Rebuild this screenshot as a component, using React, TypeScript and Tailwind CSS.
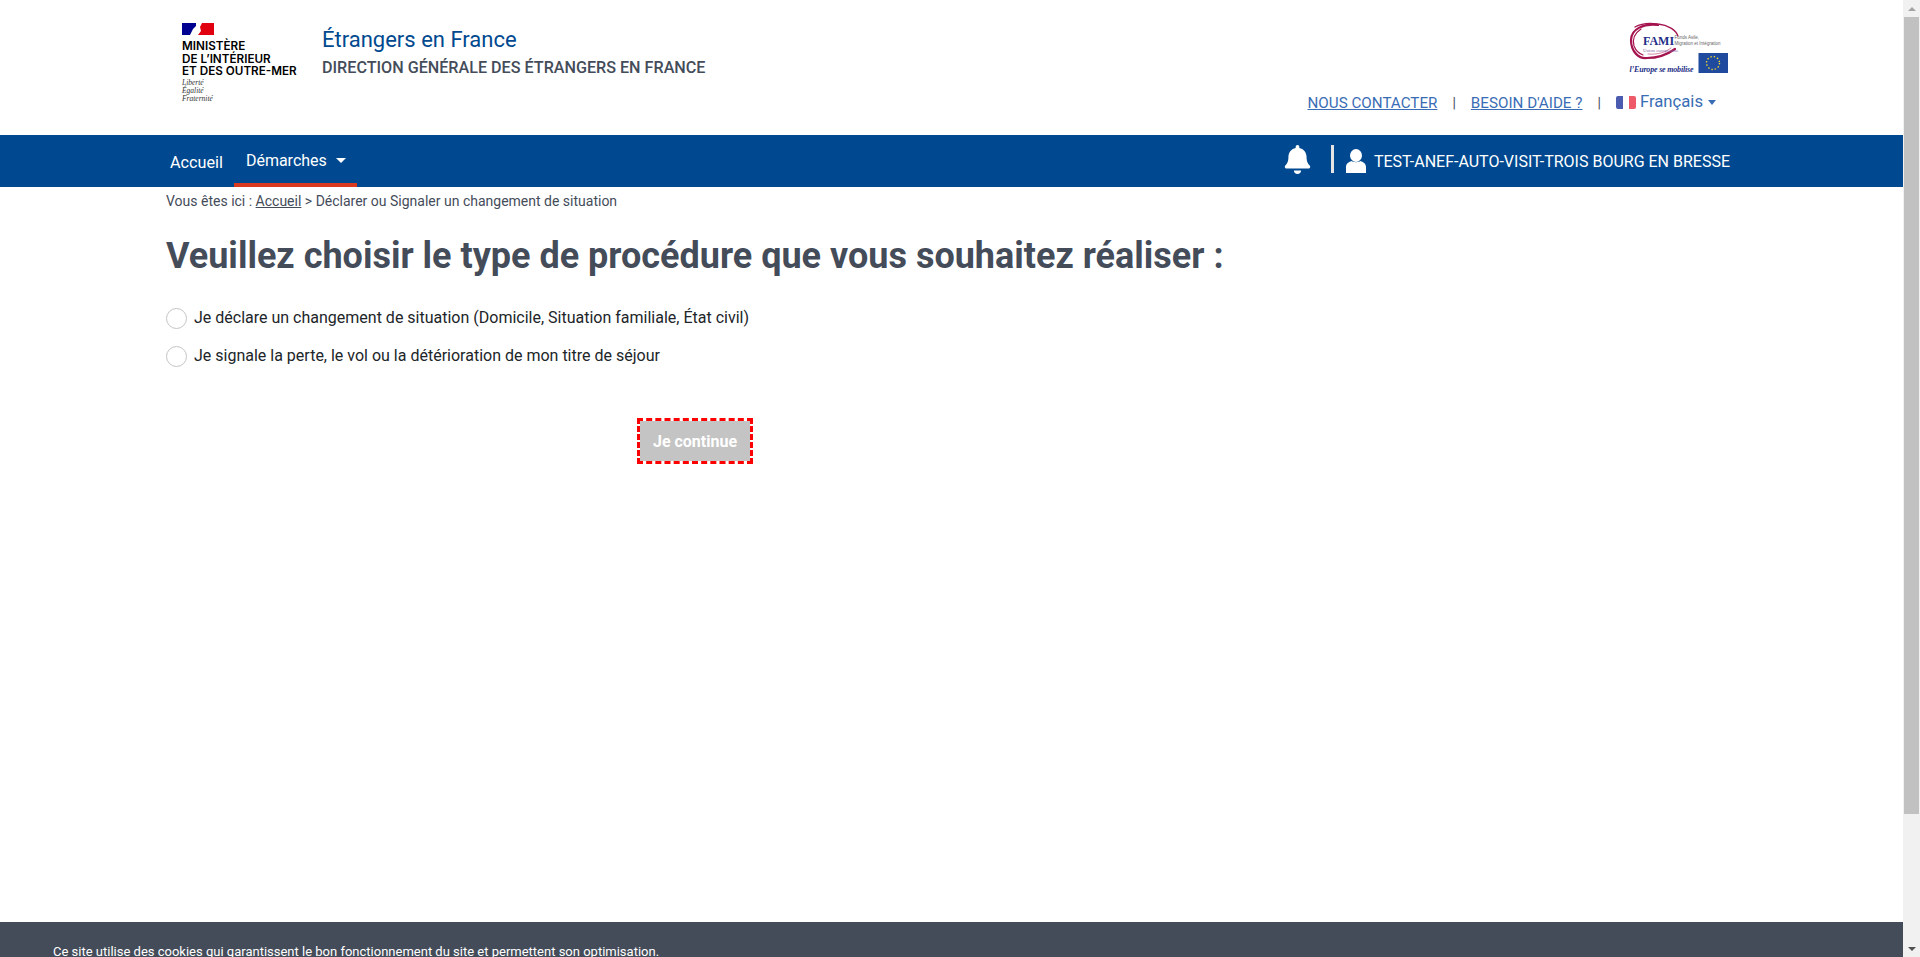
import { FaBell } from "react-icons/fa";

const Caret = ({ className }: { className: string }) => (
	<span className={`inline-block w-0 h-0 border-x-[4px] border-x-transparent border-t-[5px] ${className}`} />
);

const MinistereLogo = () => (
	<div className="w-[120px] pt-[23px] font-['Inter',sans-serif] text-black">
		<svg width="32" height="12" viewBox="0 0 32 12" className="block">
			<rect width="14" height="12" fill="#000091" />
			<rect x="14" width="6" height="12" fill="#fff" />
			<rect x="20" width="12" height="12" fill="#e1000f" />
			<path d="M8 12 L11 6 L14 3 L14 12 Z" fill="#fff" />
			<path d="M20 0 L18 4 L19 8 L16 12 L22 12 L22 0 Z" fill="#e1000f" />
		</svg>
		<div className="mt-[5px] text-[11.7px] leading-[12.5px] font-semibold whitespace-nowrap">
			<div>MINISTÈRE</div>
			<div>DE L’INTÉRIEUR</div>
			<div>ET DES OUTRE-MER</div>
		</div>
		<div className="mt-[1px] font-['Liberation_Serif',serif] italic text-[7.5px] leading-[8px] text-[#333]">
			<div>Liberté</div>
			<div>Égalité</div>
			<div>Fraternité</div>
		</div>
	</div>
);

const FamiLogo = () => (
	<svg width="100" height="56" viewBox="0 0 100 56" className="block">
		<g fill="none" stroke="#a5144f" strokeLinecap="round">
			<path d="M30 3 C16 1 3 7 3 18 C3 30 11 37 19 36 C30 36 40 32 47 27" strokeWidth="2.2" />
			<path d="M7 5 C14 1 24 1 30 2 C40 3 48 8 50 14" strokeWidth="1.3" />
			<path d="M13 7 C7 11 4 17 6 24 C8 29 12 32 15 33" strokeWidth="1.2" />
			<path d="M20 32 C30 33 38 30 43 26" strokeWidth="0.8" stroke="#c96a90" />
		</g>
		<text x="15" y="22.5" fontFamily="Liberation Serif, serif" fontWeight="700" fontSize="12" fill="#1d2f87">
			FAMI
		</text>
		<text x="46.5" y="17" fontFamily="Liberation Sans, sans-serif" fontSize="4.5" fill="#666">
			Fonds Asile,
		</text>
		<text x="46.5" y="22.5" fontFamily="Liberation Sans, sans-serif" fontSize="4.5" fill="#666">
			Migration et Intégration
		</text>
		<text x="15" y="29.5" fontFamily="Liberation Serif, serif" fontSize="4.8" fill="#8a6aa5">
			Union européenne
		</text>
		<text x="1.5" y="50" fontFamily="Liberation Serif, serif" fontStyle="italic" fontWeight="700" fontSize="8" fill="#1d2f87" textLength={64}>
			l’Europe se mobilise
		</text>
		<rect x="70.5" y="31" width="29.5" height="20" fill="#1f4a9e" />
		<circle cx="85" cy="41" r="6.5" fill="none" stroke="#f2d633" strokeWidth="1.4" strokeDasharray="1.4 2" />
	</svg>
);

const UserIcon = () => (
	<svg width="20" height="24" viewBox="0 0 20 24" className="ml-[12px]" fill="#fff">
		<ellipse cx="10" cy="6.5" rx="6" ry="6.5" />
		<path d="M0 24 V18 C0 14.5 3 13 5.5 12 C7 13.5 13 13.5 14.5 12 C17 13 20 14.5 20 18 V24 Z" />
	</svg>
);

const RadioRow = ({ label }: { label: string }) => (
	<label className="flex h-[38px] items-start">
		<span className="w-[21px] h-[21px] mt-[2px] rounded-full border border-[#c4c4c4] bg-white shrink-0" />
		<span className="ml-[7px] text-[16px] leading-[24px] text-[#212529]">{label}</span>
	</label>
);

export default function App() {
	return (
		<div className="flex h-[957px] overflow-hidden bg-white font-['Roboto',sans-serif]">
			<div className="flex-1 min-w-0 flex flex-col">
				<header className="h-[135px] flex pl-[182px] pr-[175px]">
					<MinistereLogo />
					<div className="ml-[20px] pt-[26px]">
						<div className="text-[22px] leading-[28px] text-[#00498f]">Étrangers en France</div>
						<div className="mt-[3px] text-[16.15px] leading-[22px] font-medium text-[#444c5a]">
							DIRECTION GÉNÉRALE DES ÉTRANGERS EN FRANCE
						</div>
					</div>
					<div className="ml-auto flex flex-col items-end pt-[22px]">
						<FamiLogo />
						<div className="mt-[13px] mr-[12px] flex items-center text-[15.2px] leading-[24px] text-[#3a6db5]">
							<a className="underline">NOUS CONTACTER</a>
							<span className="mx-[15px] text-[14px] text-[#444c5a]">|</span>
							<a className="underline">BESOIN D'AIDE ?</a>
							<span className="mx-[15px] text-[14px] text-[#444c5a]">|</span>
							<span className="flex items-center -translate-y-px">
								<span className="flex w-[20px] h-[13px] rounded-[2px] overflow-hidden">
									<span className="flex-1 bg-[#4a5bb0]" />
									<span className="flex-1 bg-white" />
									<span className="flex-1 bg-[#ef5a68]" />
								</span>
								<span className="ml-[4px] text-[16.7px]">Français</span>
								<Caret className="ml-[5px] border-t-[#3a6db5]" />
							</span>
						</div>
					</div>
				</header>
				<nav className="h-[52px] bg-[#004990] flex items-stretch pl-[170px] pr-[173px] text-white">
					<a className="text-[16.2px] self-center pt-[4px]">Accueil</a>
					<div className="ml-[11px] w-[123px] border-b-[4px] border-[#d9391e] flex items-center pl-[12px] pt-[7px] pb-[3px] text-[16px]">
						Démarches
						<span className="ml-[9px] inline-block w-0 h-0 -translate-y-px border-x-[5px] border-x-transparent border-t-[5px] border-t-white" />
					</div>
					<div className="ml-auto flex items-center">
						<FaBell className="w-[27px] h-[29px] -translate-y-[2px]" />
						<span className="ml-[20px] w-[3px] h-[28px] -translate-y-[2px] bg-[#e4e4e4]" />
						<UserIcon />
						<span className="ml-[8px] pt-[2px] text-[16px] whitespace-nowrap">
							TEST-ANEF-AUTO-VISIT-TROIS BOURG EN BRESSE
						</span>
					</div>
				</nav>
				<main className="flex-1 pl-[166px]">
					<div className="pt-[5px] text-[14px] leading-[18px] text-[#444c5a]">
						Vous êtes ici : <a className="underline">Accueil</a> &gt; Déclarer ou Signaler un changement de situation
					</div>
					<h1 className="mt-[24px] text-[36px] leading-[44px] font-bold text-[#444c5a]">
						Veuillez choisir le type de procédure que vous souhaitez réaliser :
					</h1>
					<div className="mt-[28px]">
						<RadioRow label="Je déclare un changement de situation (Domicile, Situation familiale, État civil)" />
						<RadioRow label="Je signale la perte, le vol ou la détérioration de mon titre de séjour" />
					</div>
					<button className="mt-[36px] ml-[471px] w-[116px] h-[46px] bg-[#c4c4c4] bg-clip-padding border-[3px] border-dashed border-[#f00] pt-[2px] text-white text-[16px] font-bold">
						Je continue
					</button>
				</main>
				<div className="h-[35px] bg-[#444c5a] overflow-hidden pl-[53px] pt-[21px] text-[13px] leading-[18px] text-white">
					Ce site utilise des cookies qui garantissent le bon fonctionnement du site et permettent son optimisation.
				</div>
			</div>
			<aside className="w-[17px] bg-[#f1f1f1] flex flex-col items-center">
				<div className="h-[17px] flex items-center justify-center">
					<span className="w-0 h-0 border-x-[4px] border-x-transparent border-b-[4px] border-b-[#a3a3a3]" />
				</div>
				<div className="w-[15px] h-[797px] bg-[#c1c1c1]" />
				<div className="mt-auto h-[17px] flex items-center justify-center">
					<span className="w-0 h-0 border-x-[4px] border-x-transparent border-t-[4px] border-t-[#505050]" />
				</div>
			</aside>
		</div>
	);
}
